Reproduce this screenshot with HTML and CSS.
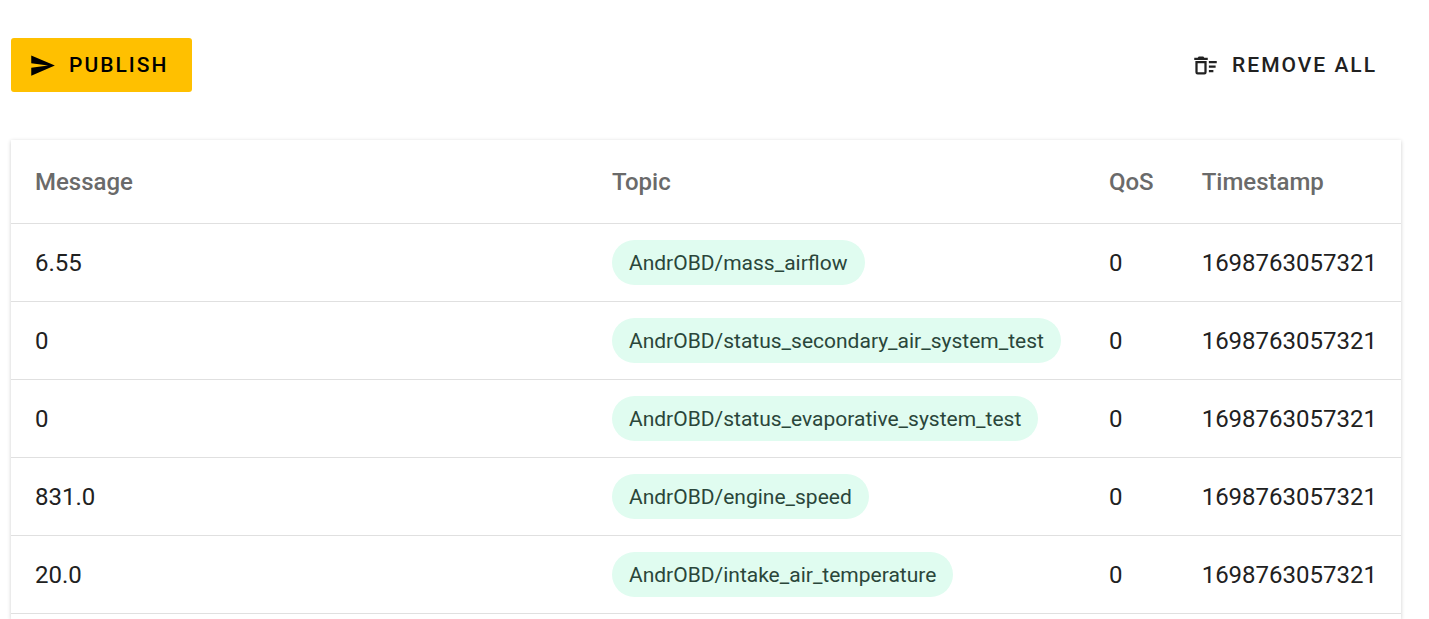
FILE: index.html
```html
<!DOCTYPE html>
<html lang="en">
<head>
<meta charset="utf-8">
<meta name="viewport" content="width=device-width, initial-scale=1">
<title>Messages</title>
<link rel="stylesheet" href="styles.css">
</head>
<body>
<header class="toolbar">
  <button class="btn btn-primary" type="button">
    <svg class="icon" viewBox="0 0 24 24" aria-hidden="true"><path d="M2,21L23,12L2,3V10L17,12L2,14V21Z"/></svg>
    <span>PUBLISH</span>
  </button>
  <button class="btn btn-text" type="button">
    <svg class="icon" viewBox="0 0 24 24" aria-hidden="true"><path d="M15,16H19V18H15V16M15,8H22V10H15V8M15,12H21V14H15V12M11,10V18H5V10H11M13,8H3V18A2,2 0 0,0 5,20H11A2,2 0 0,0 13,18V8M14,5H11L10,4H6L5,5H2V7H14V5Z"/></svg>
    <span>REMOVE ALL</span>
  </button>
</header>
<main class="card">
  <table class="messages">
    <thead>
      <tr><th class="message" scope="col">Message</th><th scope="col">Topic</th><th scope="col">QoS</th><th scope="col">Timestamp</th></tr>
    </thead>
    <tbody>
      <tr><td>6.55</td><td><span class="chip">AndrOBD/mass_airflow</span></td><td>0</td><td>1698763057321</td></tr>
      <tr><td>0</td><td><span class="chip">AndrOBD/status_secondary_air_system_test</span></td><td>0</td><td>1698763057321</td></tr>
      <tr><td>0</td><td><span class="chip">AndrOBD/status_evaporative_system_test</span></td><td>0</td><td>1698763057321</td></tr>
      <tr><td>831.0</td><td><span class="chip">AndrOBD/engine_speed</span></td><td>0</td><td>1698763057321</td></tr>
      <tr><td>20.0</td><td><span class="chip">AndrOBD/intake_air_temperature</span></td><td>0</td><td>1698763057321</td></tr>
    </tbody>
  </table>
</main>
</body>
</html>
```
FILE: styles.css
```css
* {
  box-sizing: border-box;
}

body {
  display: flex;
  flex-direction: column;
  min-height: 100vh;
  margin: 0;
  padding: 38px 28px 0 11px;
  background: #fff;
  color: #212121;
  font-family: Roboto, sans-serif;
  font-size: 24px;
}

.toolbar {
  display: flex;
  justify-content: space-between;
  margin-bottom: 48px;
}

.btn {
  display: flex;
  align-items: center;
  gap: 13px;
  height: 54px;
  padding: 1px 24px 0 18px;
  border: 0;
  border-radius: 3px;
  background: transparent;
  font-family: inherit;
  font-size: 21px;
  font-weight: 500;
  line-height: 27px;
  letter-spacing: 2px;
  cursor: pointer;
}

.btn-primary {
  background: #ffc000;
  color: #000;
}

.btn-text {
  color: #212121;
}

.icon {
  width: 27px;
  height: 27px;
  fill: currentColor;
}

.card {
  flex: 1;
  background: #fff;
  box-shadow: 0 1px 4px rgba(0, 0, 0, 0.2);
}

.messages {
  width: 100%;
  border-collapse: separate;
  border-spacing: 0;
  white-space: nowrap;
}

.messages th,
.messages td {
  height: 78px;
  padding: 0 24px;
  border-bottom: 1px solid #e0e0e0;
  text-align: left;
  vertical-align: middle;
}

.messages th {
  height: 84px;
  color: #6a6a6a;
  font-weight: 500;
}

.messages .message {
  width: 100%;
}

.chip {
  display: flex;
  align-items: center;
  width: max-content;
  height: 45px;
  padding: 0 17px;
  border-radius: 23px;
  background: #e0fcf0;
  color: #2a463a;
  font-size: 21px;
}
```
